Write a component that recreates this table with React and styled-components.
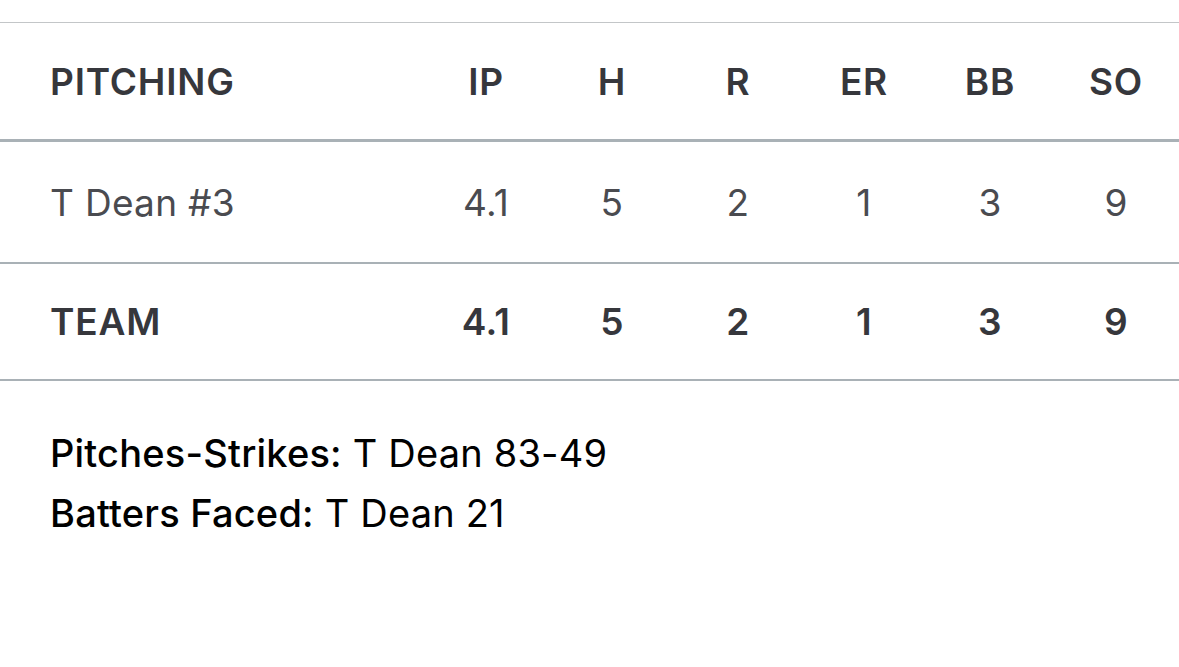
import React from "react";
import styled, { createGlobalStyle } from "styled-components";

const GlobalStyle = createGlobalStyle`
  body {
    margin: 0;
    background: #ffffff;
    font-family: Inter, "Noto Sans", "Liberation Sans", sans-serif;
  }
`;

const stats = ["IP", "H", "R", "ER", "BB", "SO"];

const pitchers = [
  { name: "T Dean #3", values: ["4.1", "5", "2", "1", "3", "9"] },
];

const team = ["4.1", "5", "2", "1", "3", "9"];

const Page = styled.div`
  padding-top: 22px;
  width: 1179px;
`;

const Row = styled.div`
  display: grid;
  grid-template-columns: 1fr repeat(6, 126px);
  align-items: center;
  height: ${(p) => p.height}px;
  border-top: ${(p) => (p.top ? "1px solid #c3c6c8" : "none")};
  border-bottom: ${(p) => p.line}px solid #a9b1b6;
`;

const Cell = styled.div`
  font-size: 37px;
  color: ${(p) => (p.bold ? "#36373c" : "#4a4b50")};
  font-weight: ${(p) => (p.bold ? 600 : 400)};
  letter-spacing: ${(p) => (p.caps ? "0.8px" : "0.3px")};
  text-align: center;
`;

const NameCell = styled(Cell)`
  text-align: left;
  padding-left: 50px;
`;

const Notes = styled.div`
  padding: 42px 0 0 50px;
  font-size: 38px;
  line-height: 60px;
  letter-spacing: 0.2px;
  color: #000;
`;

const Label = styled.span`
  font-weight: 500;
`;

const App = () => {
  return (
    <Page>
      <GlobalStyle />
      <Row height={116} line={3} top>
        <NameCell bold caps>PITCHING</NameCell>
        {stats.map((s) => (
          <Cell key={s} bold caps>
            {s}
          </Cell>
        ))}
      </Row>
      {pitchers.map((p) => (
        <Row key={p.name} height={120} line={2}>
          <NameCell>{p.name}</NameCell>
          {p.values.map((v, i) => (
            <Cell key={i}>{v}</Cell>
          ))}
        </Row>
      ))}
      <Row height={115} line={2}>
        <NameCell bold caps>TEAM</NameCell>
        {team.map((v, i) => (
          <Cell key={i} bold>
            {v}
          </Cell>
        ))}
      </Row>
      <Notes>
        <div>
          <Label>Pitches-Strikes:</Label> T Dean 83-49
        </div>
        <div>
          <Label>Batters Faced:</Label> T Dean 21
        </div>
      </Notes>
    </Page>
  );
};

export default App;
